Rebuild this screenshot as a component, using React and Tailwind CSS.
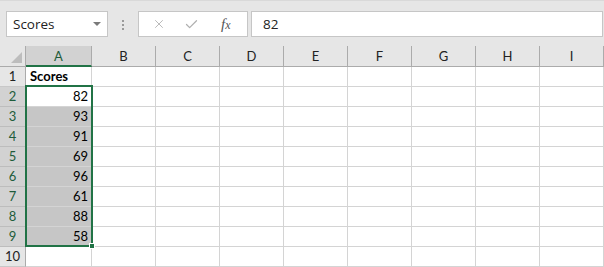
import { X, Check } from 'lucide-react';

const COLS = ['A', 'B', 'C', 'D', 'E', 'F', 'G', 'H', 'I'];
const VALUES = [null, 82, 93, 91, 69, 96, 61, 88, 58, null];

const cellFont = { fontFamily: 'Lato, "Open Sans", sans-serif' };

function TopBar() {
  return (
    <div className="h-[46px] bg-[#e6e6e6] flex items-start pt-[11px] border-t border-[#d9d9d9]" style={{ fontFamily: '"Open Sans", "Noto Sans", sans-serif' }}>
      {/* Name box */}
      <div className="ml-[6px] w-[102px] h-[26px] -mt-px bg-white border border-[#c6c6c6] flex items-center justify-between pl-[6px] pr-[6px]">
        <span className="text-[13.5px] text-[#222]">Scores</span>
        <span className="w-0 h-0 border-l-[4px] border-r-[4px] border-t-[4px] border-l-transparent border-r-transparent border-t-[#7a7a7a]" />
      </div>
      {/* separator dots */}
      <div className="w-[30px] h-[25px] flex flex-col items-center justify-center gap-[2px]">
        <span className="w-[2px] h-[2px] bg-[#9a9a9a]" />
        <span className="w-[2px] h-[2px] bg-[#9a9a9a]" />
        <span className="w-[2px] h-[2px] bg-[#9a9a9a]" />
      </div>
      {/* formula icons */}
      <div className="w-[110px] h-[26px] -mt-px bg-white border border-[#c6c6c6] flex items-center">
        <X className="ml-[13px] text-[#b0b0b0]" size={14} strokeWidth={1.5} />
        <Check className="ml-[18px] text-[#b0b0b0]" size={15} strokeWidth={2} />
        <span className="ml-[22px] text-[15px] text-[#555] italic" style={{ fontFamily: '"Liberation Serif", serif' }}>f<span className="text-[12px]">x</span></span>
      </div>
      {/* formula input */}
      <div className="ml-[3px] flex-1 h-[26px] -mt-px bg-white border border-[#c6c6c6] flex items-center pl-[11px]">
        <span className="text-[13.5px] text-[#222]">82</span>
      </div>
      <div className="w-px" />
    </div>
  );
}

function Sheet() {
  return (
    <div className="relative" style={cellFont}>
      <div className="grid grid-cols-[26px_66px_repeat(8,64px)] grid-rows-[21px_repeat(10,20px)]">
        {/* corner */}
        <div className="bg-[#e6e6e6] border-b border-r border-[#ababab] relative">
          <span className="absolute right-[3px] bottom-[3px] w-0 h-0 border-l-[11px] border-t-[11px] border-l-transparent border-t-transparent border-b-0 border-r-0" style={{ borderRight: '0', borderBottom: '11px solid #bdbdbd' }} />
        </div>
        {COLS.map((c) => (
          <div
            key={c}
            className={
              c === 'A'
                ? 'bg-[#d2d2d2] border-r border-[#ababab] border-b-2 border-b-[#217346] text-[#1e5c3a] text-[13px] flex items-center justify-center pt-[2px]'
                : 'bg-[#e6e6e6] border-r border-b border-[#ababab] text-[#222] text-[13px] flex items-center justify-center pt-[1px]'
            }
          >
            {c}
          </div>
        ))}
        {VALUES.map((v, i) => {
          const row = i + 1;
          const sel = row >= 2 && row <= 9;
          return [
            <div
              key={'h' + row}
              className={
                sel
                  ? 'bg-[#d2d2d2] border-r border-r-[#ababab] border-b border-b-[#bdbdbd] text-[#1e5c3a] text-[13px] flex items-center justify-center'
                  : 'bg-[#e6e6e6] border-r border-r-[#ababab] border-b border-b-[#c8c8c8] text-[#222] text-[13px] flex items-center justify-center'
              }
            >
              {row}
            </div>,
            ...COLS.map((c) => {
              if (c === 'A') {
                const fill = row >= 3 && row <= 9;
                return (
                  <div
                    key={c + row}
                    className={`${fill ? 'bg-[#c6c6c6]' : 'bg-white'} border-r border-b border-[#d4d4d4] text-[13px] text-black flex items-center ${row === 1 ? 'justify-start pl-[4px] font-bold' : 'justify-end pr-[3px]'}`}
                  >
                    {row === 1 ? 'Scores' : v}
                  </div>
                );
              }
              return <div key={c + row} className="bg-white border-r border-b border-[#d4d4d4]" />;
            }),
          ];
        })}
      </div>
      {/* selection A2:A9 */}
      <div className="absolute left-[25px] top-[39px] w-[68px] h-[162px] border-2 border-[#217346] pointer-events-none" />
      <div className="absolute left-[89px] top-[197px] w-[6px] h-[6px] bg-[#217346] border border-white pointer-events-none" />
    </div>
  );
}

export default function App() {
  return (
    <div className="w-[604px] h-[267px] overflow-hidden bg-white">
      <TopBar />
      <Sheet />
    </div>
  );
}
